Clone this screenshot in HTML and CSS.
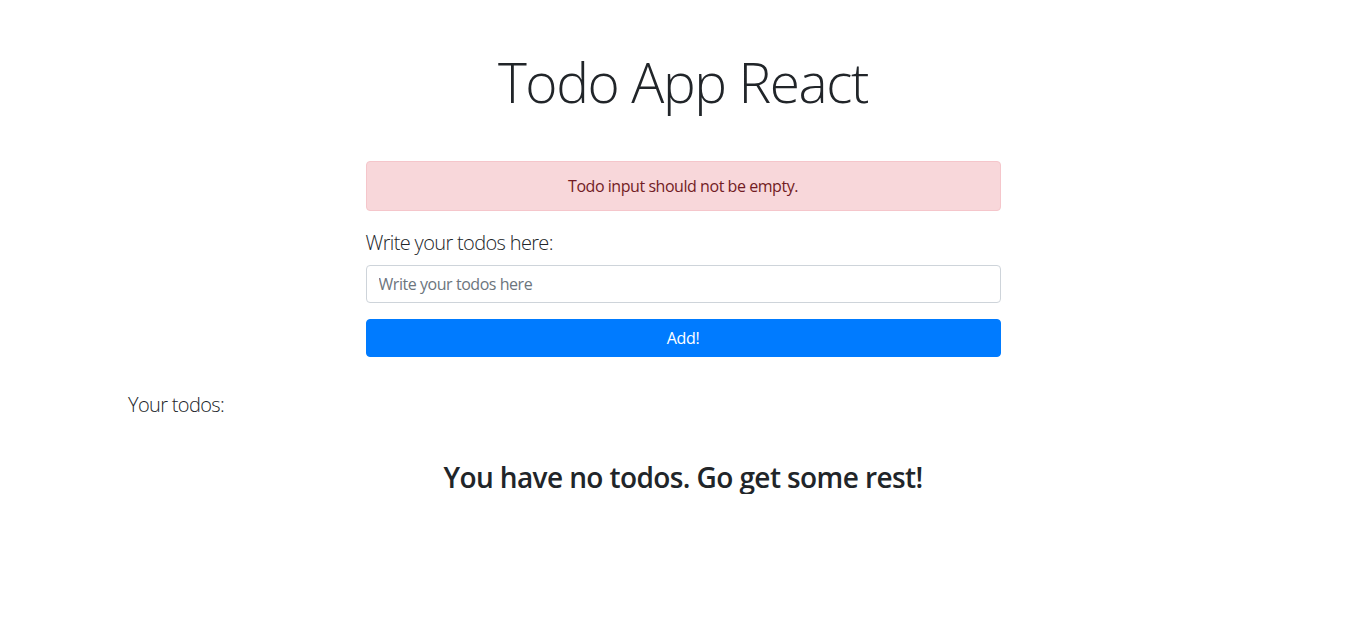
FILE: index.html
```html
<!DOCTYPE html>
<html lang="en">
<head>
<meta charset="utf-8">
<title>Todo App React</title>
<link rel="stylesheet" href="styles.css">
</head>
<body>
<div class="container">
  <h1 class="title">Todo App React</h1>
  <div class="row-center">
    <div class="col">
      <div class="alert">Todo input should not be empty.</div>
      <form class="todo-form">
        <label class="lead" for="todo">Write your todos here:</label>
        <input id="todo" class="form-control" type="text" placeholder="Write your todos here">
        <button type="button" class="btn">Add!</button>
      </form>
    </div>
  </div>
  <p class="lead todos-label">Your todos:</p>
  <h3 class="empty">You have no todos. Go get some rest!</h3>
</div>
</body>
</html>
```
FILE: styles.css
```css
* { box-sizing: border-box; }
html, body { margin: 0; padding: 0; }
body {
  font-family: "Open Sans", "Noto Sans", sans-serif;
  font-size: 16px;
  line-height: 1.5;
  color: #212529;
  background: #fff;
}
.container {
  max-width: 1140px;
  margin: 0 auto;
  padding: 0 15px;
}
.title {
  margin: 48px 0 46px;
  text-align: center;
  font-size: 55px;
  font-weight: 300;
  line-height: 67px;
  letter-spacing: -1.4px;
  color: #212529;
}
.row-center { display: flex; justify-content: center; }
.col { width: 635px; }
.alert {
  padding: 12px 20px;
  margin-bottom: 17px;
  border: 1px solid #f5c6cb;
  border-radius: 4px;
  background: #f8d7da;
  color: #721c24;
  text-align: center;
  font-size: 16px;
  line-height: 24px;
  letter-spacing: -0.45px;
}
.todo-form { display: flex; flex-direction: column; }
.lead {
  font-size: 20px;
  font-weight: 300;
  line-height: 30px;
  color: #212529;
  letter-spacing: -0.65px;
}
.todo-form label { margin-bottom: 7px; }
.form-control {
  height: 38px;
  padding: 6px 12px;
  font: inherit;
  font-size: 16px;
  color: #495057;
  border: 1px solid #ced4da;
  border-radius: 4px;
  margin-bottom: 16px;
  letter-spacing: -0.45px;
}
.form-control::placeholder { color: #6c757d; }
.btn {
  height: 38px;
  border: 1px solid #007bff;
  border-radius: 4px;
  background: #007bff;
  color: #fff;
  font: inherit;
  font-size: 16px;
  letter-spacing: -0.3px;
}
.todos-label { margin: 33px 0 0; }
.empty {
  margin: 40px 0 0;
  text-align: center;
  font-size: 28px;
  font-weight: 600;
  line-height: 34px;
  letter-spacing: -0.6px;
}
```
